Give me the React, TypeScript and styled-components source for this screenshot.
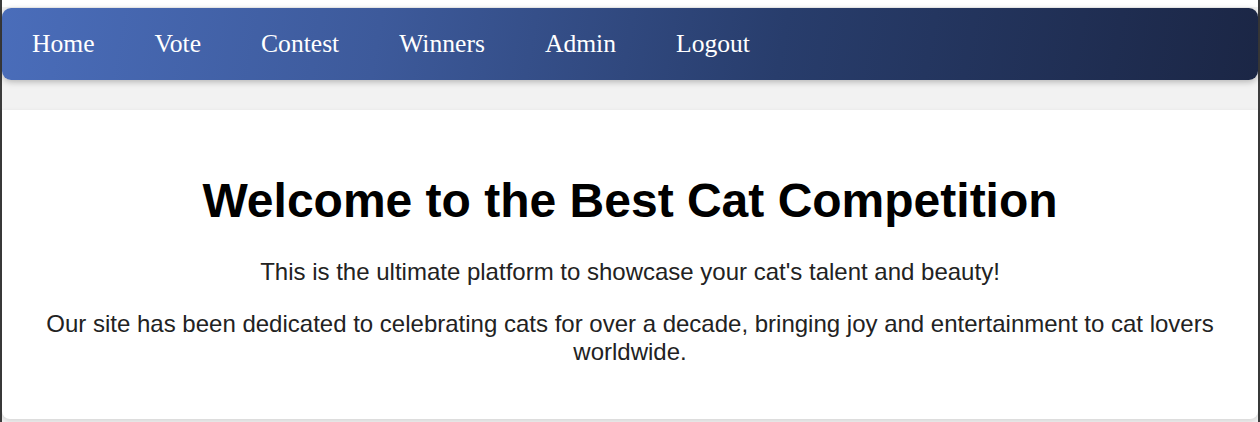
import React from "react";
import styled, { createGlobalStyle } from "styled-components";

const Global = createGlobalStyle`
  html, body { margin: 0; padding: 0; background: #f2f2f2; }
  body { font-family: "Liberation Sans", Arial, sans-serif; }
`;

const Frame = styled.div`
  min-height: 422px;
  box-sizing: border-box;
  border-left: 2px solid #3b3b3b;
  border-right: 2px solid #3b3b3b;
  background: linear-gradient(#ffffff 0 7px, #f2f2f2 7px);
  padding-top: 8px;
  display: flex;
  flex-direction: column;
`;

const NavBar = styled.nav`
  height: 72px;
  display: flex;
  align-items: center;
  border-radius: 9px;
  background: linear-gradient(100deg, #4a6dba 0%, #3d5a9b 30%, #283d6c 62%, #1b2645 100%);
  box-shadow: 0 2px 6px rgba(0, 0, 0, 0.25);
`;

const NavLink = styled.a`
  font-family: "Liberation Serif", "Times New Roman", serif;
  font-size: 25.6px;
  color: #ffffff;
  text-decoration: none;
  padding: 0 30px;
`;

const Card = styled.main`
  margin-top: 30px;
  background: #ffffff;
  border-radius: 0 0 8px 8px;
  box-shadow: 0 2px 5px rgba(0, 0, 0, 0.12);
  padding: 31px 40px 29px;
  text-align: center;
`;

const Title = styled.h1`
  font-size: 48px;
  font-weight: bold;
  color: #000;
  margin: 32px 0 30px;
`;

const Text = styled.p`
  font-size: 24px;
  color: #222;
  margin: 24px 0;
`;

const links = ["Home", "Vote", "Contest", "Winners", "Admin", "Logout"];

export default function App() {
  return (
    <>
      <Global />
      <Frame>
        <NavBar>
          {links.map((l) => (
            <NavLink key={l} href="#">
              {l}
            </NavLink>
          ))}
        </NavBar>
        <Card>
          <Title>Welcome to the Best Cat Competition</Title>
          <Text>This is the ultimate platform to showcase your cat's talent and beauty!</Text>
          <Text>
            Our site has been dedicated to celebrating cats for over a decade, bringing joy and
            entertainment to cat lovers worldwide.
          </Text>
        </Card>
      </Frame>
    </>
  );
}
